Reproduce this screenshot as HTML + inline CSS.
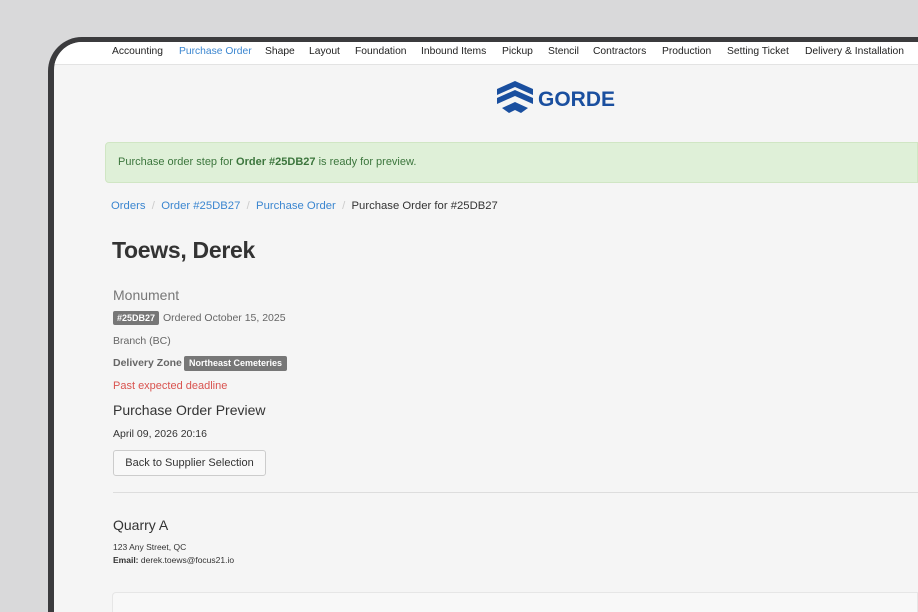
<!DOCTYPE html>
<html><head><meta charset="utf-8"><style>
*{margin:0;padding:0;box-sizing:border-box}
html,body{width:918px;height:612px;overflow:hidden}
body{background:#d9d9da;font-family:"Liberation Sans",Arial,sans-serif;position:relative}
.frame{position:absolute;left:48px;top:37px;width:870px;height:575px;background:#3b3b3d;border-radius:34px 0 0 0}
.screen{position:absolute;left:54px;top:42px;width:864px;height:570px;background:#f5f5f5;border-radius:28px 0 0 0;overflow:hidden}
.nav{position:absolute;left:0;top:0;width:100%;height:23px;background:#fff;border-bottom:1px solid #e3e3e3}
.nav span{position:absolute;top:4px;font-size:10.3px;color:#222;white-space:nowrap}
.a{position:absolute;white-space:nowrap}
</style></head><body>
<div class="frame"></div>
<div class="screen">
<div class="nav">
<span style="left:58px">Accounting</span>
<span style="left:125px;color:#3b86d0">Purchase Order</span>
<span style="left:211px">Shape</span>
<span style="left:255px">Layout</span>
<span style="left:301px">Foundation</span>
<span style="left:367px">Inbound Items</span>
<span style="left:448px">Pickup</span>
<span style="left:494px">Stencil</span>
<span style="left:539px">Contractors</span>
<span style="left:608px">Production</span>
<span style="left:673px">Setting Ticket</span>
<span style="left:751px">Delivery &amp; Installation</span>
</div>
<svg class="a" style="left:443px;top:39px" width="36" height="33" viewBox="0 0 36 33">
<path d="M0 8 L18 0 L36 8 L36 14 L18 6 L0 14Z" fill="#1a4f9f"/>
<path d="M0 17 L18 9 L36 17 L36 23 L18 15 L0 23Z" fill="#1a4f9f"/>
<path d="M5 27 L18 21 L31 27 L24 32 L18 29 L12 32Z" fill="#1a4f9f"/>
</svg>
<div class="a" style="left:484px;top:46px;font-size:21px;font-weight:bold;color:#1a4f9f">GORDE</div>
<div class="a" style="left:51px;top:100px;width:813px;height:41px;background:#dff0d8;border:1px solid #d0e6c4;border-radius:4px 0 0 4px"></div>
<div class="a" style="left:64px;top:114px;font-size:11px;color:#3c763d">Purchase order step for <b>Order #25DB27</b> is ready for preview.</div>
<div class="a" style="left:57px;top:158px;font-size:11.3px;color:#3b86d0">Orders <span style="color:#ccc">&nbsp;/&nbsp;</span> Order #25DB27 <span style="color:#ccc">&nbsp;/&nbsp;</span> Purchase Order <span style="color:#ccc">&nbsp;/&nbsp;</span> <span style="color:#333">Purchase Order for #25DB27</span></div>
<div class="a" style="left:58px;top:195px;font-size:23px;font-weight:bold;color:#333;letter-spacing:-0.3px">Toews, Derek</div>
<div class="a" style="left:59px;top:245px;font-size:14px;color:#777">Monument</div>
<div class="a" style="left:59px;top:269px;height:14px;padding:0 4px;background:#777;color:#fff;font-size:9px;font-weight:bold;line-height:14px;border-radius:2px">#25DB27</div>
<div class="a" style="left:109px;top:270px;font-size:10.5px;color:#666">Ordered October 15, 2025</div>
<div class="a" style="left:59px;top:293px;font-size:10.5px;color:#666">Branch (BC)</div>
<div class="a" style="left:59px;top:315px;font-size:10.5px;font-weight:bold;color:#666">Delivery Zone</div>
<div class="a" style="left:130px;top:314px;height:15px;padding:0 5px;background:#777;color:#fff;font-size:9px;font-weight:bold;line-height:15px;border-radius:2px">Northeast Cemeteries</div>
<div class="a" style="left:59px;top:338px;font-size:11px;color:#d9534f">Past expected deadline</div>
<div class="a" style="left:59px;top:360px;font-size:14px;color:#333">Purchase Order Preview</div>
<div class="a" style="left:59px;top:386px;font-size:10.5px;color:#333">April 09, 2026 20:16</div>
<div class="a" style="left:59px;top:408px;width:153px;height:26px;background:#f8f8f8;border:1px solid #ccc;border-radius:3px;font-size:11px;color:#333;line-height:24px;text-align:center">Back to Supplier Selection</div>
<div class="a" style="left:59px;top:450px;width:805px;height:1px;background:#ddd"></div>
<div class="a" style="left:59px;top:475px;font-size:14px;color:#333">Quarry A</div>
<div class="a" style="left:59px;top:500px;font-size:8.5px;color:#333">123 Any Street, QC</div>
<div class="a" style="left:59px;top:513px;font-size:8.5px;color:#333"><b>Email:</b> derek.toews@focus21.io</div>
<div class="a" style="left:58px;top:550px;width:806px;height:20px;background:#f8f8f8;border:1px solid #e6e6e6;border-bottom:none;border-radius:4px 0 0 0"></div>
</div>
</body></html>
